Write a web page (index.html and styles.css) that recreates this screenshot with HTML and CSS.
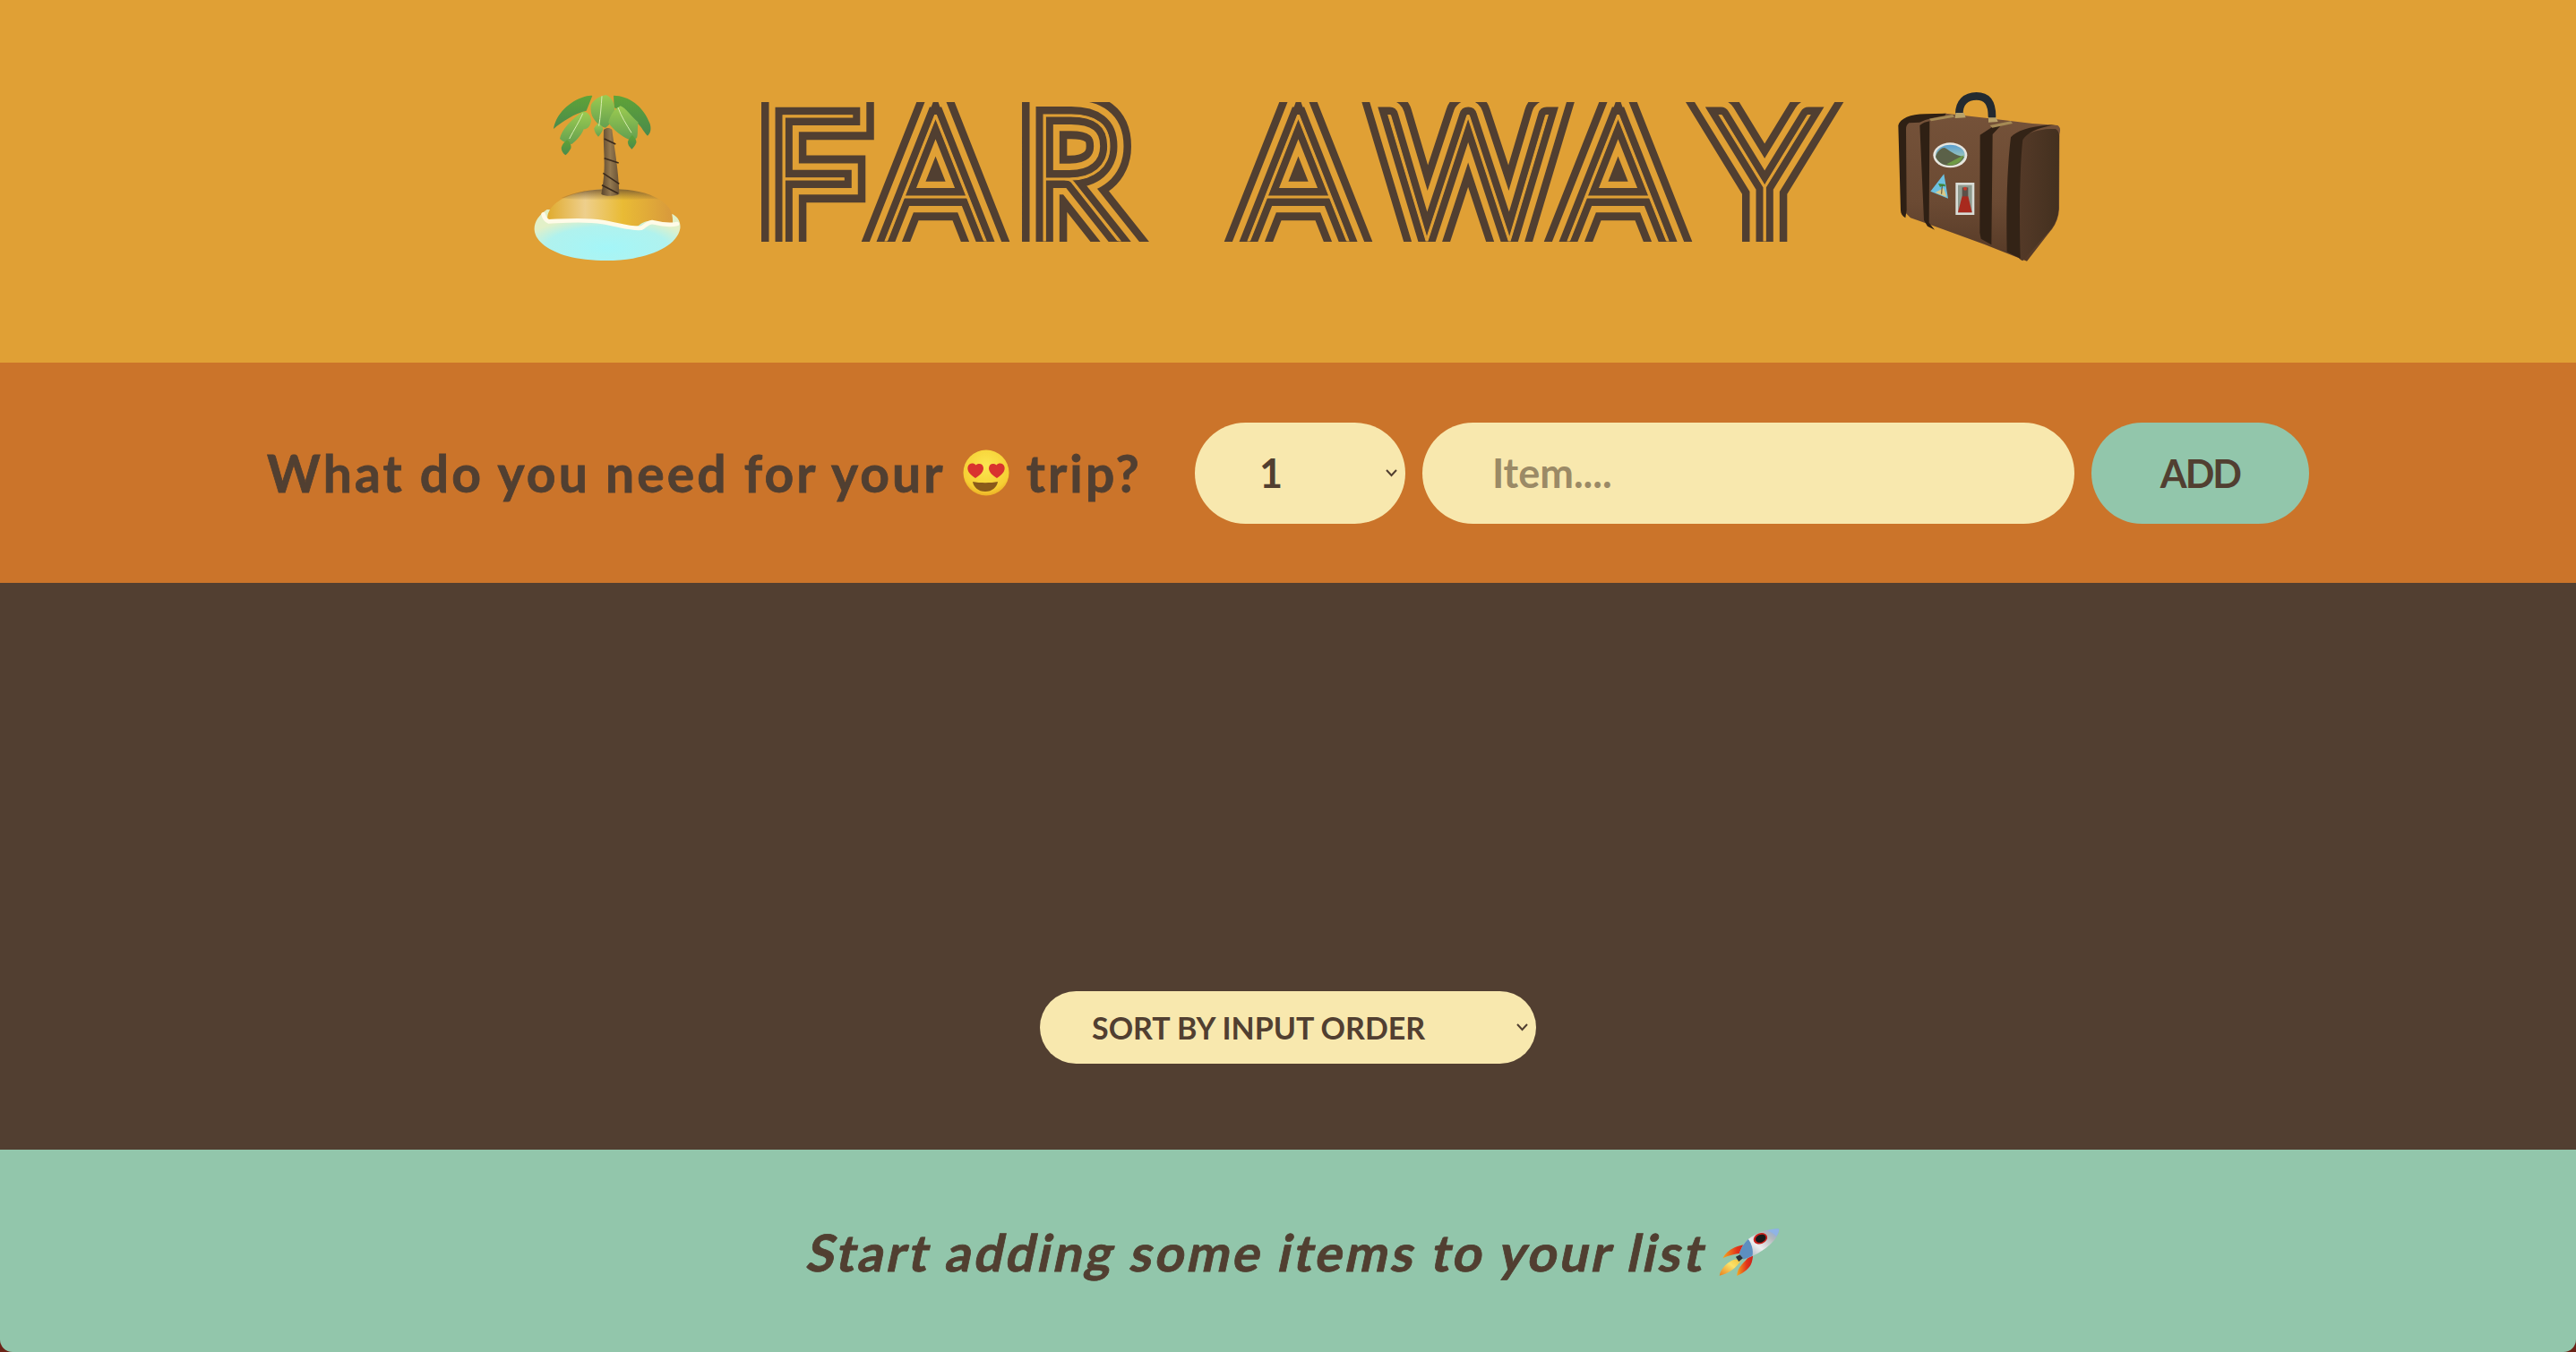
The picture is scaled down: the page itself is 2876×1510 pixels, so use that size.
FILE: index.html
```html
<!DOCTYPE html>
<html lang="en">
<head>
<meta charset="utf-8">
<title>Far Away</title>
<link rel="stylesheet" href="styles.css">
</head>
<body>
<div class="app">
  <header class="logo">
    <svg class="emoji-island" viewBox="0 0 570 630" aria-hidden="true">
      <defs>
        <radialGradient id="water" cx=".5" cy=".75" r=".6"><stop offset="0" stop-color="#a4f6f8"/><stop offset=".7" stop-color="#b0f2ee"/><stop offset="1" stop-color="#e2f0c8"/></radialGradient>
        <linearGradient id="sand" x1="0" y1="0" x2="1" y2="0"><stop offset="0" stop-color="#e0ab2e"/><stop offset=".3" stop-color="#eecf8c"/><stop offset=".6" stop-color="#e9bb35"/><stop offset="1" stop-color="#d8993c"/></linearGradient>
        <linearGradient id="sandtop" x1="0" y1="0" x2="0" y2="1"><stop offset="0" stop-color="#6f5230" stop-opacity=".85"/><stop offset="1" stop-color="#7a5a30" stop-opacity="0"/></linearGradient>
        <linearGradient id="trunk" x1="0" y1="0" x2="1" y2="0"><stop offset="0" stop-color="#5a452c"/><stop offset=".5" stop-color="#93784f"/><stop offset="1" stop-color="#6a5235"/></linearGradient>
        <linearGradient id="leafA" x1="0" y1="0" x2="0" y2="1"><stop offset="0" stop-color="#5fa337"/><stop offset="1" stop-color="#4a8a4c"/></linearGradient>
        <linearGradient id="leafB" x1="0" y1="0" x2="0" y2="1"><stop offset="0" stop-color="#9ccb50"/><stop offset="1" stop-color="#64a050"/></linearGradient>
      </defs>
      <path fill="url(#water)" d="M62 432C35 450 18 475 20 500c3 40 50 70 110 88 60 16 150 20 220 8 80-14 150-50 158-100 3-25-10-40-25-48z"/>
      <path fill="url(#sand)" d="M64 466c-4-34 30-64 70-79 40-16 100-26 155-24 60 2 120 14 160 42 25 18 36 40 34 72-20 8-50 4-70-6-15-4-35 6-45 16-30 12-80 0-130-14-60-8-130-6-174-7z"/>
      <path fill="url(#sandtop)" d="M110 393c50-22 115-32 180-30 60 2 110 12 150 36-60-6-85 4-160 2-70-2-120 0-170-8z"/>
      <path fill="none" stroke="#fffbe8" stroke-width="14" stroke-linecap="round" d="M50 448c2 10 8 20 18 24 50-2 120-8 180 2 50 8 95 24 130 20 12-6 20-18 36-20 18 4 50 14 84 6"/>
      <path fill="url(#trunk)" d="M252 165c10-8 20-8 28 0 6 50 22 130 24 215-15 8-50 8-60 0 4-20 10-60 10-100 0-40-4-80-2-115z"/>
      <path fill="none" stroke="#3a2a1c" stroke-width="5" d="M254 195l38 18M254 260l48 16M250 310l54 36M246 350l54 28"/>
      <path fill="url(#leafA)" d="M84 162c6-40 40-85 95-105 15-6 30-8 35-6l-20 50c-40 10-80 35-110 61z"/>
      <path fill="url(#leafA)" d="M285 50c50 0 100 35 122 95 4 14 4 30-8 40-12-10-20-30-32-40-20-20-50-40-80-55z"/>
      <path fill="url(#leafB)" d="M105 195c5-30 40-65 75-90 15-4 30 10 30 30-2 15-10 28-25 28-5 15-20 35-40 50-15-2-30-8-40-18z"/>
      <path fill="url(#leafB)" d="M210 80c12-20 35-30 50-32 20 8 30 30 28 55-4 30-15 45-30 55-20-4-35-20-45-40-4-12-6-28-3-38z"/>
      <path fill="url(#leafB)" d="M268 140c6-25 20-45 40-55 20 8 30 30 60 55-4 10 0 40-5 52-10 8-25 6-30 4-20-10-50-30-65-56z"/>
      <path fill="url(#leafA)" d="M110 225c3-10 12-22 20-26 8 6 15 18 12 28-5 10-12 18-18 23-8-6-14-15-14-25z"/>
      <path fill="url(#leafA)" d="M333 205c3-10 10-20 15-22 6 6 15 15 13 25-3 10-8 15-15 22-8-8-14-15-13-25z"/>
      <path fill="url(#leafB)" d="M220 160c4-8 8-14 14-16 8 4 15 12 16 18-3 10-10 20-16 26-8-8-14-18-14-28z"/>
      <path fill="none" stroke="#d8edb0" stroke-width="3" d="M246 52c-2 30-5 70-10 100M182 110c-10 25-30 55-45 85M300 90c10 30 30 60 45 85"/>
    </svg>

    <svg class="logo-title" viewBox="0 0 1191 156" role="img">
      <defs>
        <clipPath id="logo-band"><rect x="-20" y="0" width="1240" height="156"/></clipPath>
        <text id="logo-text" class="logo-text" x="1 133 292 430 538 693 895 1065" y="148">FAR AWAY</text>
      </defs>
      <g clip-path="url(#logo-band)">
        <g class="logo-stretch">
          <use href="#logo-text" class="logo-l1"/>
          <use href="#logo-text" class="logo-l2"/>
          <use href="#logo-text" class="logo-l3"/>
          <use href="#logo-text" class="logo-l4"/>
        </g>
      </g>
    </svg>

    <svg class="emoji-case" viewBox="0 0 660 630" aria-hidden="true">
      <defs>
        <linearGradient id="leather" x1="0" y1="0" x2="0" y2="1"><stop offset="0" stop-color="#755239"/><stop offset=".6" stop-color="#6b4a33"/><stop offset="1" stop-color="#553926"/></linearGradient>
        <linearGradient id="endpanel" x1="0" y1="0" x2="1" y2="0"><stop offset="0" stop-color="#553a28"/><stop offset="1" stop-color="#43301f"/></linearGradient>
        <linearGradient id="sky" x1="0" y1="0" x2="0" y2="1"><stop offset="0" stop-color="#5a9fd0"/><stop offset="1" stop-color="#c9dfae"/></linearGradient>
      </defs>
      <path fill="none" stroke="#232a30" stroke-width="26" stroke-linecap="round" d="M292 112c0-38 22-60 58-60 36 0 52 24 52 68"/>
      <path fill="url(#leather)" d="M92 150c8-22 30-30 60-34l95-6 160 18 130 16 85 6c12 8 8 20 6 30l-1 250c-2 30-12 55-30 75l-78 100-140-55-150-55-100-35-30-30z"/>
      <path fill="url(#endpanel)" d="M500 190c30-20 80-30 115-28 10 6 13 16 12 30l-2 240c-2 28-12 52-30 72l-90 100c-10-4-15-10-18-20-3-130 0-270 13-394z"/>
      <path fill="#2f2014" d="M88 150c6-22 40-38 90-38l70-2-4 8c-30 4-60 10-85 22l-35 2c-8 6-10 12-10 22l2 270-4 26c-10-6-16-14-16-26z"/>
      <path fill="#2f2014" d="M160 150c10-8 20-12 33-14l-2 340 19 24-24-12-12-20z"/>
      <path fill="#2f2014" d="M362 182l40-26 30-6-28 30-4 370-35-20-4-20z"/>
      <path fill="#332316" d="M465 190c20-24 70-40 150-42-50 8-90 22-110 50-10 80-12 270-8 398l-45-22c-3-130 0-280 13-384z"/>
      <path fill="#a58a55" d="M192 128l78-14 6 8-78 14zM395 150l70-14 6 8-68 14z"/>
      <path fill="#b9a269" d="M280 108h28l6 16-36 2zM390 124h26l6 14-32 2z"/>
      <ellipse cx="262" cy="250" rx="57" ry="42" fill="#e8e6df"/>
      <ellipse cx="262" cy="250" rx="49" ry="35" fill="url(#sky)"/>
      <path fill="#5b6148" d="M213 255c6-20 20-30 30-30 20 10 30 25 66 30-8 18-26 30-47 30-25 0-42-12-49-30z"/>
      <path fill="#6f9a45" d="M250 280c20-10 40-22 58-30-6 18-24 34-46 34z"/>
      <path fill="#6cc0e0" d="M241 313l-45 58 59 24z"/>
      <path fill="#d9c98a" d="M212 375l38 15-10-30z"/>
      <path fill="#3f8a3a" d="M222 345l22 2 2 8-12-2-6 4z"/>
      <path fill="none" stroke="#5c4a2c" stroke-width="3" d="M235 350l-2 30"/>
      <rect x="280" y="342" width="63" height="108" fill="#d8dcd6"/>
      <rect x="288" y="350" width="47" height="92" fill="#8f9a8e"/>
      <path fill="#a82a1e" d="M288 442l14-55h20l13 55z"/>
      <rect x="302" y="358" width="20" height="30" fill="#5c5048"/>
      <circle cx="312" cy="362" r="6" fill="#c93a2a"/>
    </svg>
  </header>

  <form class="add-form">
    <h3 class="add-title">What do you need for your
      <svg class="emoji-heart" viewBox="0 0 52 52" aria-hidden="true">
        <defs>
          <radialGradient id="face" cx=".5" cy=".35" r=".7"><stop offset="0" stop-color="#fbe651"/><stop offset=".75" stop-color="#f6cf33"/><stop offset="1" stop-color="#e9a521"/></radialGradient>
        </defs>
        <circle cx="26" cy="26" r="25.5" fill="url(#face)"/>
        <path fill="#8a5a1a" d="M11 36c8 1.600 20 1.600 28 0-1 6-6 11-14 11s-13-5-14-11z"/>
        <path fill="#d9332f" d="M14 32C8 28 4.500 24 5.500 19.500 6.500 15.500 11.500 14 14.500 17.500c4-3 8.500-1 8.500 3.500 0 4-4 8-9 11z"/>
        <path fill="#d9332f" d="M38 32c6-4 9.500-8 8.500-12.500C45.500 15.500 40.500 14 37.500 17.500c-4-3-8.500-1-8.500 3.500 0 4 4 8 9 11z"/>
      </svg>
      trip?</h3>
    <select class="count-select" aria-label="Quantity">
      <option>1</option>
      <option>2</option>
      <option>3</option>
    </select>
    <input class="item-input" type="text" placeholder="Item....">
    <button class="add-button" type="button">ADD</button>
  </form>

  <main class="list">
    <select class="sort-select" aria-label="Sort">
      <option>SORT BY INPUT ORDER</option>
    </select>
  </main>

  <footer class="stats">
    <em class="stats-text">Start adding some items to your list</em>
    <svg class="emoji-rocket" viewBox="55 33 205 166" aria-hidden="true">
      <defs>
        <linearGradient id="hull" x1="0" y1="1" x2="1" y2="0"><stop offset="0" stop-color="#8a96a2"/><stop offset=".45" stop-color="#eceef0"/><stop offset=".75" stop-color="#b4b8bc"/><stop offset="1" stop-color="#7fa8e0"/></linearGradient>
        <linearGradient id="fin" x1="0" y1="0" x2="1" y2="0"><stop offset="0" stop-color="#f6a81e"/><stop offset=".6" stop-color="#e2351a"/><stop offset="1" stop-color="#c9201a"/></linearGradient>
        <linearGradient id="flame" x1="0" y1="1" x2="1" y2="0"><stop offset="0" stop-color="#e8821e"/><stop offset=".6" stop-color="#fbe26a"/><stop offset="1" stop-color="#f2c23a"/></linearGradient>
      </defs>
      <path fill="url(#fin)" d="M68 136c8-16 22-28 40-36 12-5 30-8 40-12l-20 32c-20 2-42 8-60 16z"/>
      <path fill="url(#fin)" d="M116 196c0-14 6-28 16-38 8-8 24-26 38-38 0 14-2 28-8 40-10 16-28 28-46 36z"/>
      <path fill="url(#flame)" d="M57 195c2-14 10-24 20-35 10-10 24-18 34-20l18 4c-6 12-18 24-30 32-14 10-28 16-42 19z"/>
      <path fill="url(#hull)" d="M258 38c-28-3-70 8-104 34-14 13-22 26-30 48l14 20c22-6 44-16 64-30 34-24 54-46 56-72z"/>
      <path fill="#5d8fc0" d="M154 72c-14 13-22 26-30 48l14 20c10-3 20-7 30-12 4-18 -2-40-14-56z"/>
      <path fill="#8fb4e6" d="M258 38c-12-2-28 1-40 6 12 2 24 10 30 18 6-8 10-16 10-24z"/>
      <path fill="#2b333a" d="M112 132l14-8 10 12-14 12z"/>
      <ellipse cx="195" cy="70" rx="24" ry="18" transform="rotate(-22 195 70)" fill="#c9201a"/>
      <ellipse cx="196" cy="70" rx="18" ry="13" transform="rotate(-22 196 70)" fill="#17191b"/>
    </svg>
  </footer>
</div>
</body>
</html>
```

FILE: styles.css
```css
* { box-sizing: border-box; margin: 0; padding: 0; }

html, body { height: 100%; }

body {
  background: #6b2418;
  font-family: "Lato", "Noto Sans", sans-serif;
  font-weight: 700;
  color: #513f31;
  overflow: hidden;
}

.app {
  height: 100vh;
  display: grid;
  grid-template-rows: 405px 246px 1fr 226px;
  border-radius: 0 0 14px 14px;
  overflow: hidden;
}

/* header */
.logo {
  background: #e0a035;
  display: flex;
  justify-content: center;
  align-items: flex-start;
  padding-top: 90px;
}

.emoji-island { width: 190px; height: 210px; margin-left: 24px; margin-right: 71px; flex: none; }
.emoji-case { width: 220px; height: 210px; margin-left: 48px; flex: none; }

.logo-title { width: 1191px; height: 156px; margin-top: 24px; flex: none; overflow: visible; }

.logo-stretch { transform: scaleY(1.05); }

.logo-text {
  font-family: "Lato", sans-serif;
  font-weight: 100;
  font-size: 190px;
  stroke-linejoin: miter;
  stroke-miterlimit: 3;
}
.logo-l1 { fill: #513f31; stroke: #513f31; stroke-width: 48px; }
.logo-l2 { fill: #e0a035; stroke: #e0a035; stroke-width: 31px; }
.logo-l3 { fill: #513f31; stroke: #513f31; stroke-width: 17px; }
.logo-l4 { fill: #e0a035; stroke: #e0a035; stroke-width: 1px; }

/* form */
.add-form {
  background: #cb742a;
  display: flex;
  justify-content: center;
  align-items: center;
  gap: 19px;
}

.add-title {
  font-size: 57px;
  font-weight: 700;
  letter-spacing: 3.1px;
  -webkit-text-stroke: 0.8px #513f31;
  margin-right: 40px;
  white-space: nowrap;
  display: flex;
  align-items: center;
  gap: 19px;
}

.emoji-heart { width: 52px; height: 52px; flex: none; }

.count-select,
.item-input,
.add-button {
  height: 113px;
  border: none;
  border-radius: 57px;
  font-family: inherit;
  font-size: 45px;
  font-weight: 700;
  color: #513f31;
}

.count-select,
.sort-select {
  appearance: none;
  background-color: #f8e8ae;
  background-image: url("data:image/svg+xml,%3Csvg xmlns='http://www.w3.org/2000/svg' width='13' height='9'%3E%3Cpath d='M1 1l5.500 6L12 1' fill='none' stroke='%23513f31' stroke-width='2'/%3E%3C/svg%3E");
  background-repeat: no-repeat;
}

.count-select {
  width: 235px;
  padding-left: 72px;
  background-position: right 9px center;
}

.item-input {
  width: 728px;
  padding-left: 78px;
  background: #f8e8ae;
  outline: none;
}
.item-input::placeholder { color: #9b8a66; opacity: 1; }

.add-button {
  width: 243px;
  background: #92c6ab;
  font-size: 43px;
  letter-spacing: -2px;
}

/* list */
.list {
  background: #523f31;
  display: flex;
  flex-direction: column;
  align-items: center;
  justify-content: flex-end;
  padding-bottom: 96px;
}

.sort-select {
  width: 554px;
  height: 81px;
  border: none;
  border-radius: 41px;
  padding-left: 58px;
  font-family: inherit;
  font-size: 34px;
  font-weight: 700;
  color: #513f31;
  background-position: right 9px center;
}

/* stats */
.stats {
  background: #92c6ab;
  display: flex;
  justify-content: center;
  align-items: flex-start;
  gap: 12px;
  padding: 75px 0 0 14px;
}

.stats-text {
  display: block;
  font-size: 57px;
  font-style: normal;
  font-weight: 700;
  letter-spacing: 3.1px;
  -webkit-text-stroke: 0.8px #513f31;
  line-height: 78px;
  white-space: nowrap;
  transform: skewX(-12deg);
}

.emoji-rocket { width: 68px; height: 55px; flex: none; margin-top: 12px; }
```
